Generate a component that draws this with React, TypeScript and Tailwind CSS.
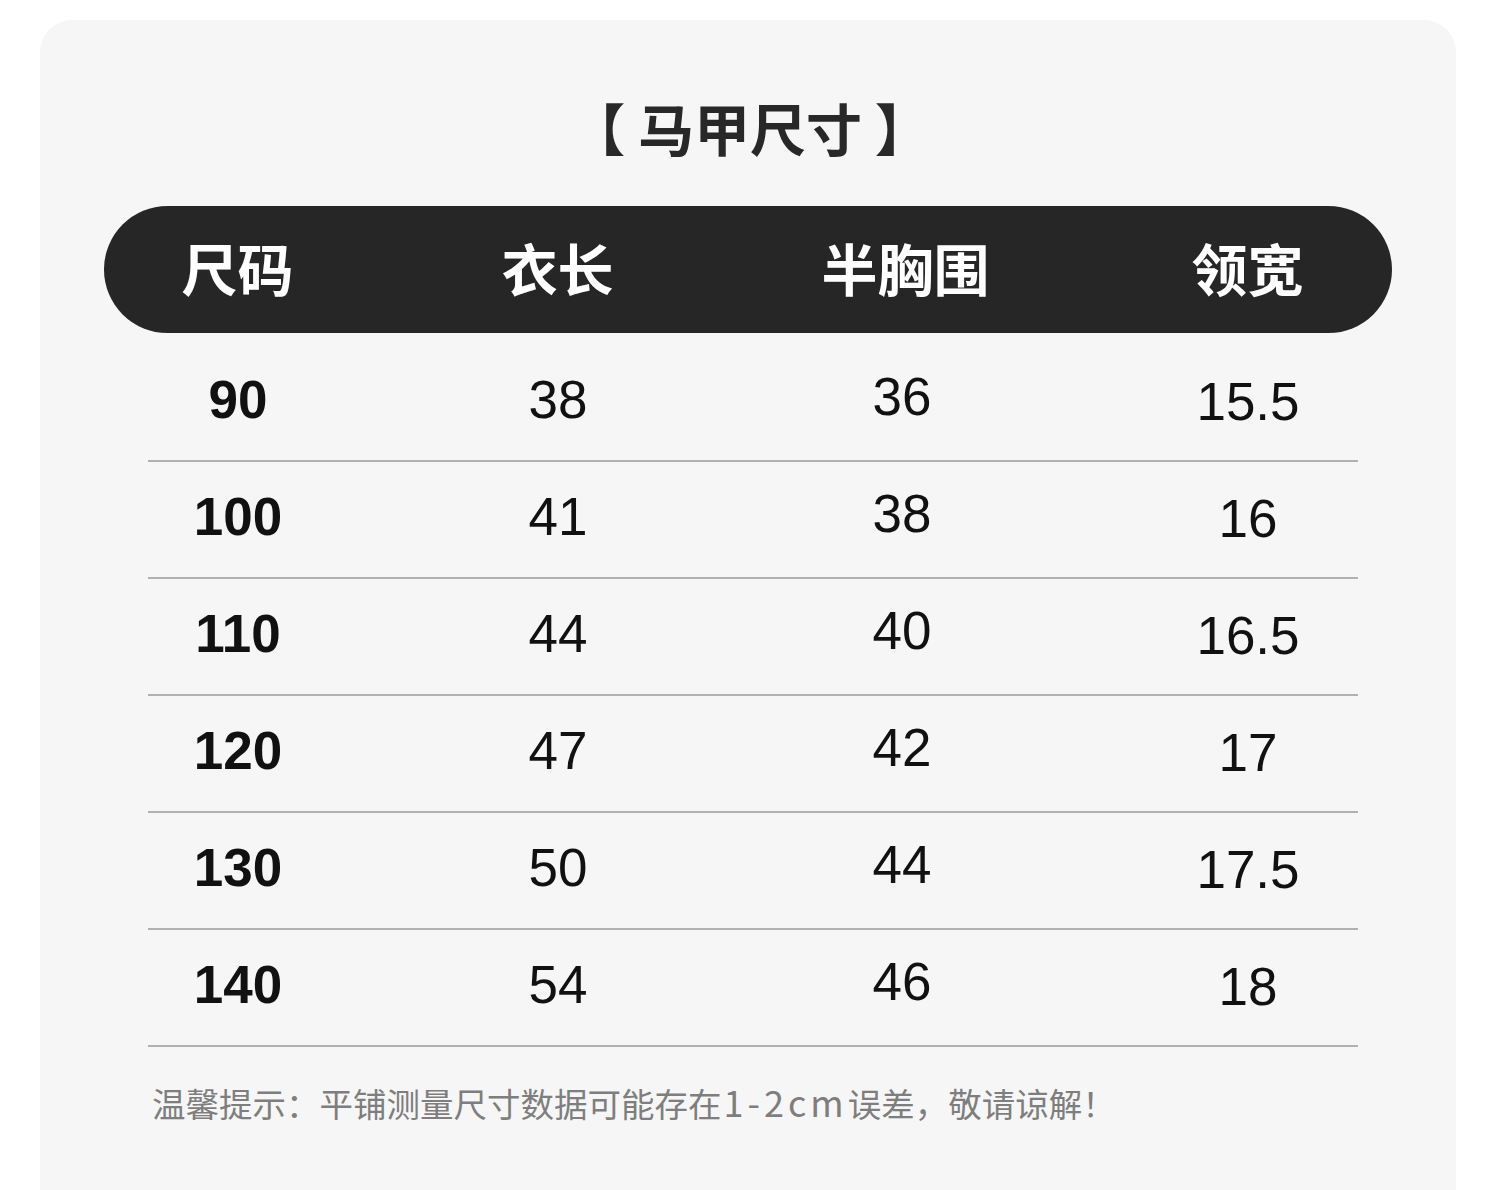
import React from 'react';

const cjk = "font-['Noto_Sans_CJK_SC',sans-serif]";
const num = "font-['Liberation_Sans','Noto_Sans_CJK_SC',sans-serif]";

// left margin of each cell (all cells 160px wide)
const cols = ['', 'ml-[160px]', 'ml-[184px]', 'ml-[186px]'];
// small vertical nudges seen in the data columns
const nudge = ['', '', '-mt-[6px]', 'mt-[4px]'];

const headers = ['尺码', '衣长', '半胸围', '领宽'];

const rows = [
  ['90', '38', '36', '15.5'],
  ['100', '41', '38', '16'],
  ['110', '44', '40', '16.5'],
  ['120', '47', '42', '17'],
  ['130', '50', '44', '17.5'],
  ['140', '54', '46', '18'],
];

const App = () => {
  return (
    <div className="w-[1500px] h-[1190px] bg-white pt-[20px] pl-[40px] overflow-hidden">
      <section className="w-[1416px] h-[1170px] bg-[#f6f6f6] rounded-t-[32px] flex flex-col items-center pt-[79px]">
        <h2 className={`${cjk} text-[56px] leading-[56px] font-bold text-[#282828] ml-[4px] whitespace-pre`}>
          【 马甲尺寸 】
        </h2>

        <div className="mt-[51px] w-[1288px] h-[127px] bg-[#262626] rounded-full flex items-center pl-[54px] pb-[6px] -ml-[1px]">
          {headers.map((h, i) => (
            <div
              key={h}
              className={`${cjk} ${cols[i]} w-[160px] shrink-0 text-center whitespace-nowrap text-[56px] leading-none font-bold text-white`}
            >
              {h}
            </div>
          ))}
        </div>

        <div className="mt-[12px] w-[1210px] ml-[10px] flex flex-col">
          {rows.map((r) => (
            <div
              key={r[0]}
              className="h-[117px] border-b-2 border-[#b1b1b1] flex items-center pl-[10px] pb-[6px]"
            >
              {r.map((v, i) => (
                <div
                  key={i}
                  className={`${num} ${cols[i]} ${nudge[i]} w-[160px] shrink-0 text-center text-[53px] leading-none text-[#111] ${
                    i === 0 ? 'font-bold' : 'font-normal'
                  }`}
                >
                  {v}
                </div>
              ))}
            </div>
          ))}
          <p className={`${cjk} mt-[37px] ml-[4px] text-[33.5px] leading-[34px] text-[#7e7e7e] whitespace-nowrap`}>
            温馨提示：平铺测量尺寸数据可能存在
            <span className="text-[36px] tracking-[4px] ml-[2px]">1-2cm</span>
            误差，敬请谅解！
          </p>
        </div>
      </section>
    </div>
  );
};

export default App;
